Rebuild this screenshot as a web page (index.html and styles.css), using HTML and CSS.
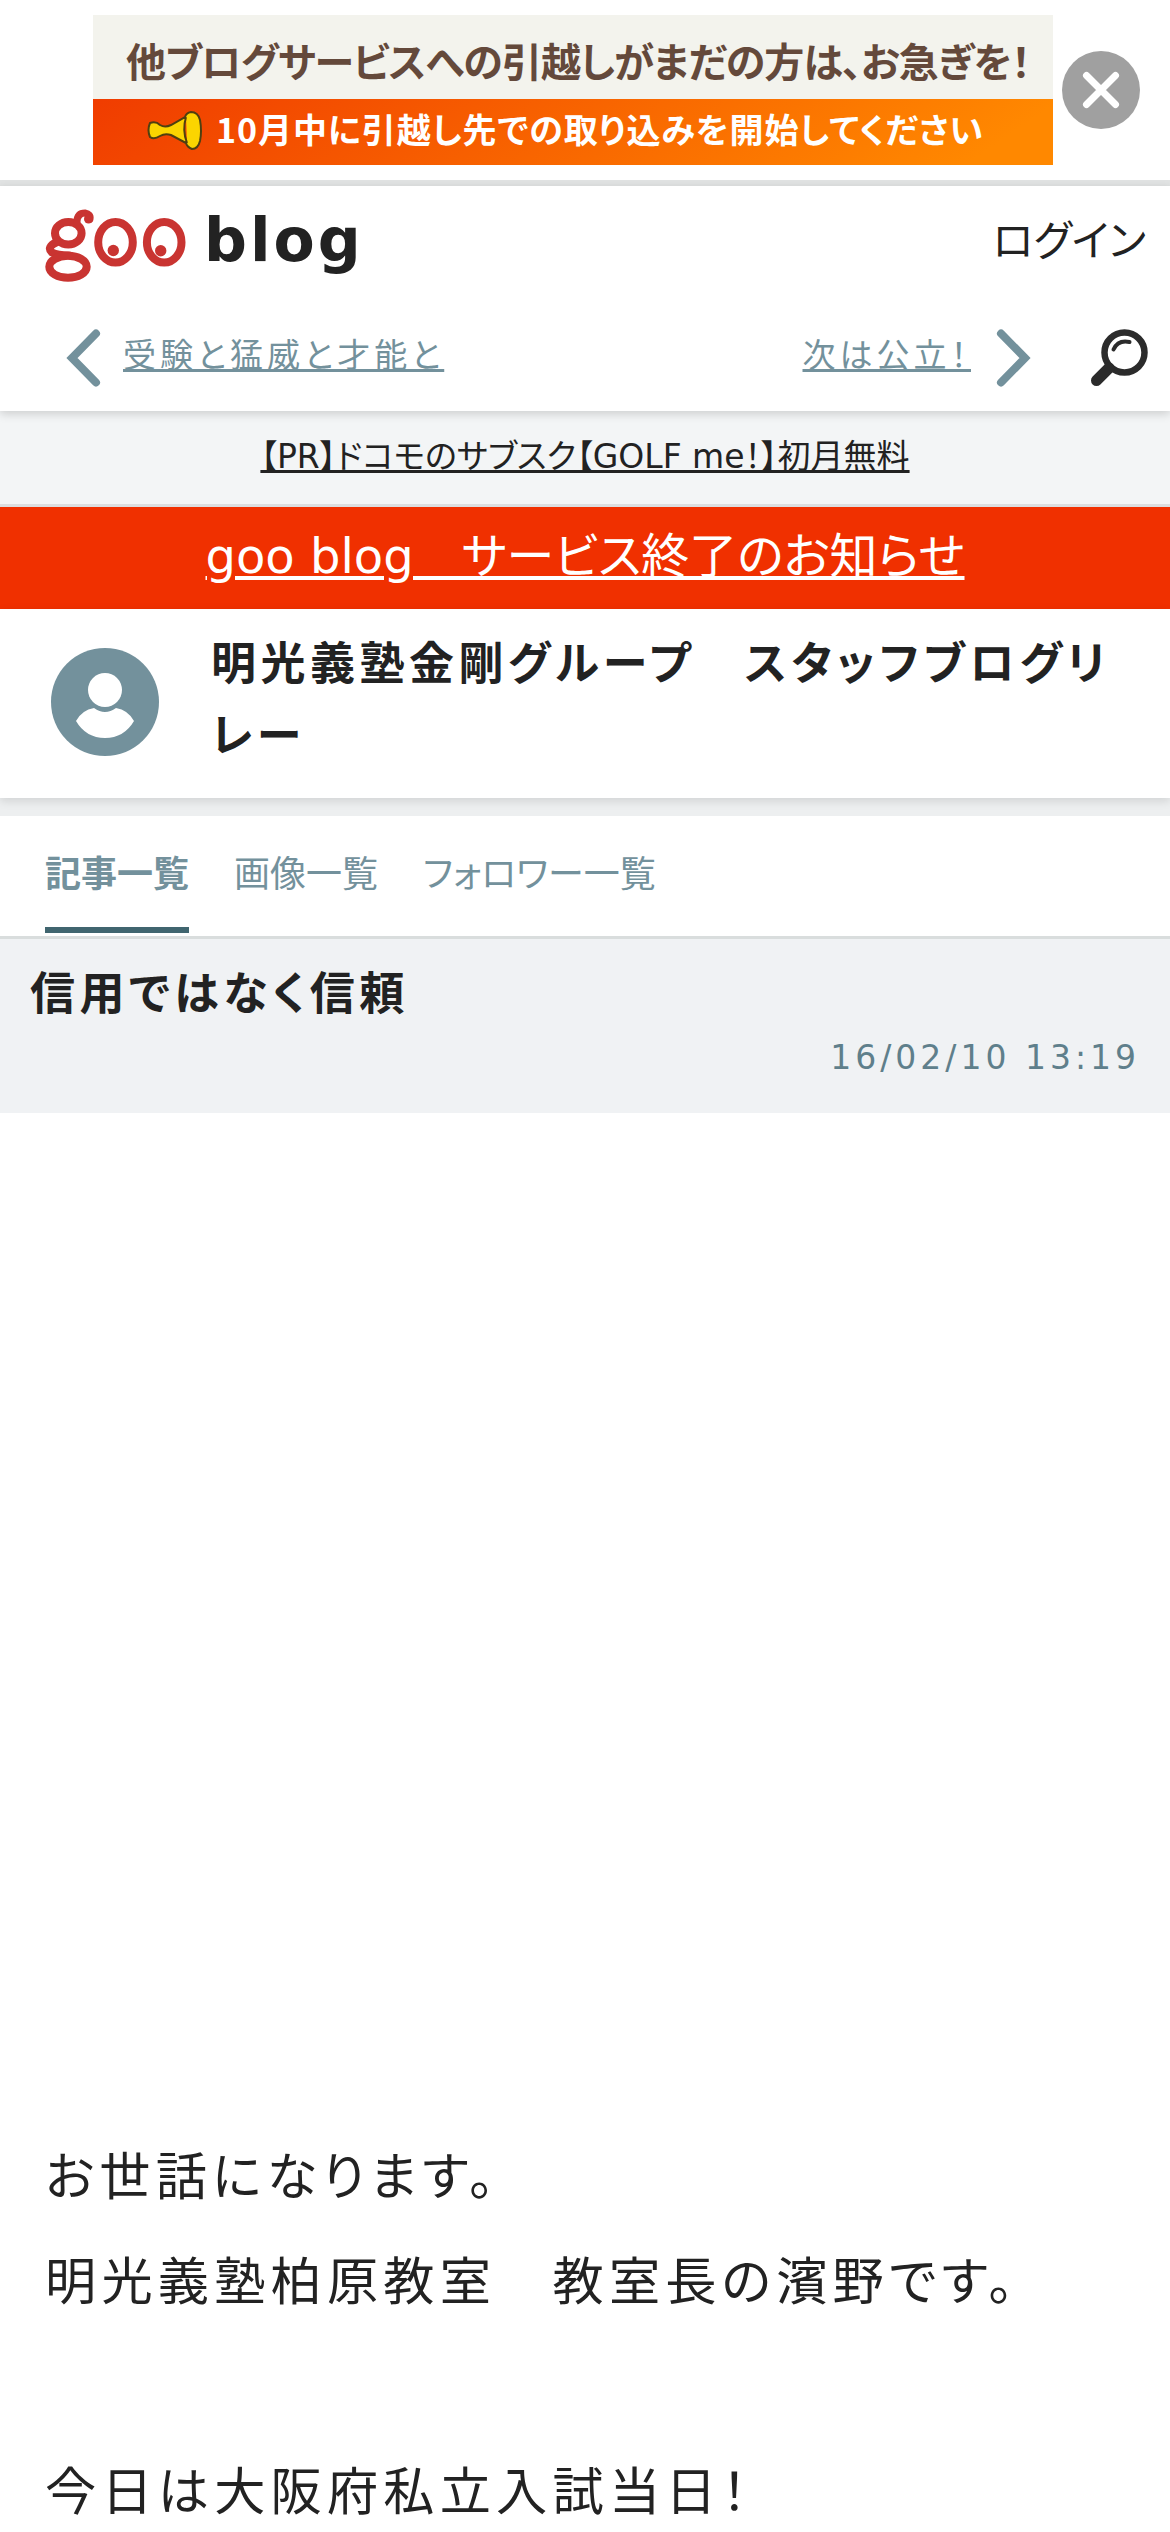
FILE: index.html
```html
<!DOCTYPE html>
<html lang="ja">
<head>
<meta charset="utf-8">
<title>信用ではなく信頼 - goo blog</title>
<link rel="stylesheet" href="styles.css">
</head>
<body>
<aside class="promo">
  <svg class="promo-banner" viewBox="0 0 960 150" width="960" height="150">
    <defs>
      <linearGradient id="promo-fill" x1="0" y1="0" x2="1" y2="0.1">
        <stop offset="0" stop-color="#f03c00"/>
        <stop offset="1" stop-color="#ff8800"/>
      </linearGradient>
    </defs>
    <rect width="960" height="84" fill="#f3f3ed"/>
    <rect y="84" width="960" height="66" fill="url(#promo-fill)"/>
    <text class="promo-lead" x="33" y="62" textLength="905">他ブログサービスへの引越しがまだの方は、お急ぎを！</text>
    <path d="M57 108 Q63 106 67 110 Q72 113 78 110 L92 102 Q93 98 98 97 Q105 97 107 105 Q109 116 107 126 Q105 134 99 134 Q94 132 93 128 L78 120 Q72 118 67 121 Q61 125 57 122 Q54 115 57 108Z M93 102 Q89 115 94 128" fill="#fbd500" stroke="#4f4010" stroke-width="2"/>
    <text class="promo-sub" x="123" y="128" textLength="767">10月中に引越し先での取り込みを開始してください</text>
  </svg>
  <svg class="promo-close" viewBox="0 0 78 78" width="78" height="78">
    <circle cx="39" cy="39" r="39" fill="#a0a0a0"/>
    <path d="M24.500 24.500 L53.500 53.500 M53.500 24.500 L24.500 53.500" stroke="#fff" stroke-width="7" stroke-linecap="round"/>
  </svg>
</aside>

<header class="site-header">
  <div class="brand-row">
    <div class="brand">
      <svg class="goo-mark" viewBox="0 0 142 73" width="142" height="73">
        <g fill="none" stroke="#c93431" stroke-width="8" stroke-linecap="round">
          <ellipse cx="23.300" cy="24.200" rx="13.300" ry="11.300"/>
          <path d="M32 13 Q32 4 40 4 Q46 5 45 10" stroke-width="7"/>
          <path d="M12 33 Q1 38 7 43.500 Q12 46 24 46.500"/>
          <ellipse cx="23" cy="57.800" rx="18.700" ry="11"/>
          <ellipse cx="70.500" cy="33.200" rx="17.300" ry="20.300"/>
          <ellipse cx="119.200" cy="33.200" rx="17.300" ry="20.300"/>
        </g>
        <g fill="#c93431">
          <circle cx="43.500" cy="10" r="4.500"/>
          <circle cx="68.300" cy="41.500" r="5.700"/>
          <circle cx="115.700" cy="41.700" r="5.700"/>
        </g>
      </svg>
      <span class="brand-name">blog</span>
    </div>
    <a class="login">ログイン</a>
  </div>
  <nav class="entry-nav">
    <svg class="chevron" viewBox="0 0 36 58" width="36" height="58"><path d="M31 4.500 L7 29 L31 53.500"/></svg>
    <a class="prev">受験と猛威と才能と</a>
    <a class="next">次は公立！</a>
    <svg class="chevron" viewBox="0 0 36 58" width="36" height="58"><path d="M5 4.500 L29 29 L5 53.500"/></svg>
    <svg class="search" viewBox="0 0 58 58" width="58" height="58">
      <g fill="none" stroke="#2b2b2b" stroke-linecap="round">
        <circle cx="34.500" cy="23.500" r="20" stroke-width="6.500"/>
        <path d="M6.500 51.500 L19 39" stroke-width="11"/>
        <path d="M23.500 20.500 Q28 10.500 39.500 13" stroke-width="4"/>
      </g>
    </svg>
  </nav>
</header>

<div class="pr"><a>【PR】ドコモのサブスク【GOLF me！】初月無料</a></div>
<div class="notice"><a>goo blog　サービス終了のお知らせ</a></div>

<section class="profile">
  <svg class="avatar" viewBox="0 0 108 108" width="108" height="108">
    <circle cx="54" cy="54" r="54" fill="#73919c"/>
    <circle cx="54" cy="42" r="17" fill="#fff"/>
    <path d="M43 60 Q54 68 65 60 Q77 62 83 73 Q73 90 54 90 Q35 90 25 73 Q31 62 43 60Z" fill="#fff"/>
  </svg>
  <h1 class="blog-title">明光義塾金剛グループ　スタッフブログリレー</h1>
</section>

<nav class="tabs">
  <a class="tab tab-current">記事一覧</a>
  <a class="tab">画像一覧</a>
  <a class="tab">フォロワー一覧</a>
</nav>

<article>
  <div class="entry-head">
    <h2 class="entry-title">信用ではなく信頼</h2>
    <time class="entry-date">16/02/10 13:19</time>
  </div>
  <div class="ad-space"></div>
  <div class="entry-body">お世話になります。<br>明光義塾柏原教室　教室長の濱野です。<br><br>今日は大阪府私立入試当日！</div>
</article>
</body>
</html>
```
FILE: styles.css
```css
* { box-sizing: border-box; }

body {
  margin: 0;
  height: 2532px;
  overflow: hidden;
  background: #fff;
  color: #222;
  font-family: "DejaVu Sans", "Noto Sans CJK JP", sans-serif;
  font-feature-settings: "palt";
}

svg { display: block; flex: none; }

.promo {
  height: 186px;
  padding: 15px 0 0 93px;
  border-bottom: 6px solid #e1e3e3;
  display: flex;
  gap: 9px;
}
.promo-close { margin-top: 36px; }
.promo-lead,
.promo-sub {
  font-family: "Noto Sans CJK JP", sans-serif;
  font-weight: 700;
}
.promo-lead { font-size: 40px; fill: #64493b; }
.promo-sub { font-size: 34px; fill: #fff; }

.site-header {
  position: relative;
  height: 225px;
  background: #fff;
  box-shadow: 0 3px 9px rgba(0, 0, 0, 0.16);
}
.brand-row {
  height: 111px;
  padding: 0 24px 0 45px;
  display: flex;
  justify-content: space-between;
  align-items: center;
}
.brand { display: flex; align-items: center; gap: 17px; }
.goo-mark { margin-top: 8px; }
.brand-name {
  margin-bottom: 4px;
  font-size: 60px;
  font-weight: 700;
  line-height: 72px;
  letter-spacing: 3px;
}
.login { font-size: 42px; line-height: 60px; }
.entry-nav {
  height: 114px;
  padding: 8px 22px 0 65px;
  display: flex;
  align-items: center;
  color: #73919c;
  font-size: 33px;
  letter-spacing: 4px;
}
.entry-nav a {
  padding-bottom: 10px;
  text-decoration: underline;
}
.chevron {
  fill: none;
  stroke: #73919c;
  stroke-width: 8;
  stroke-linecap: round;
}
.prev { margin-left: 22px; }
.next { margin-left: auto; margin-right: 25px; }
.search { margin-left: 58px; }

.pr {
  height: 96px;
  padding-top: 25px;
  background: #f3f5f6;
  border-bottom: 3px solid #dcdedf;
  text-align: center;
  font-size: 33px;
  line-height: 42px;
  text-decoration: underline;
}
.notice {
  height: 102px;
  background: #f03000;
  color: #fff;
  text-align: center;
  font-size: 48px;
  line-height: 98px;
  text-decoration: underline;
}

.profile {
  position: relative;
  height: 189px;
  padding: 20px 48px 0 51px;
  display: flex;
  gap: 52px;
  background: #fff;
  box-shadow: 0 3px 9px rgba(0, 0, 0, 0.12);
}
.avatar { margin-top: 19px; }
.blog-title {
  margin: 0;
  font-size: 45px;
  line-height: 72px;
  letter-spacing: 4.5px;
}

.tabs {
  height: 141px;
  padding: 0 45px;
  border-top: 18px solid #edeff0;
  border-bottom: 3px solid #d9dddd;
  display: flex;
  gap: 45px;
  color: #73919c;
  font-size: 36px;
  line-height: 118px;
}
.tab { height: 117px; }
.tab-current {
  font-weight: 700;
  border-bottom: 6px solid #40656f;
}

.entry-head {
  height: 174px;
  padding: 20px 30px;
  background: #f0f2f4;
  display: flex;
  flex-direction: column;
}
.entry-title {
  margin: 0;
  font-size: 45px;
  line-height: 72px;
  letter-spacing: 4.5px;
}
.entry-date {
  align-self: flex-end;
  color: #5f7f8b;
  font-size: 33px;
  line-height: 54px;
  letter-spacing: 4px;
}

.ad-space { height: 1012px; }
.entry-body {
  padding: 0 45px;
  font-size: 51.2px;
  line-height: 105px;
  letter-spacing: 5.2px;
}
```
